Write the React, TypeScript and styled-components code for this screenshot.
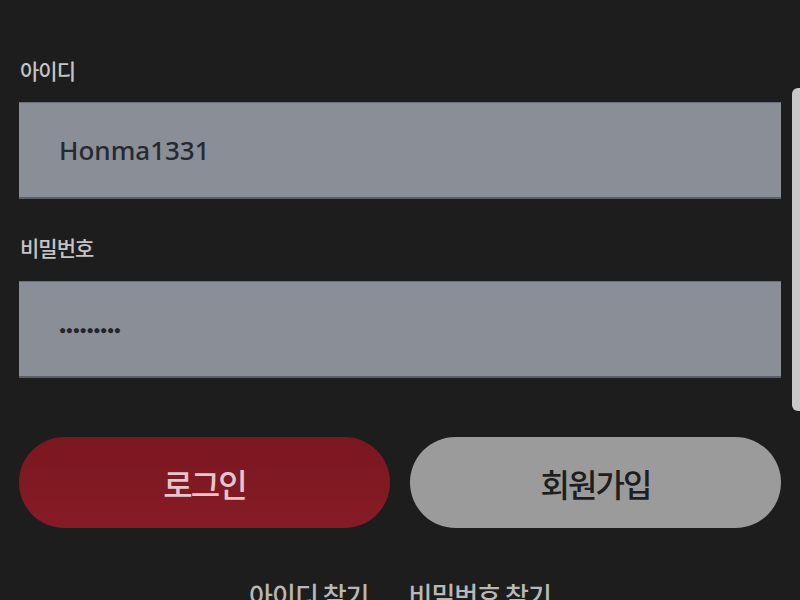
import React from "react"
import styled, { createGlobalStyle } from "styled-components"

const GlobalStyle = createGlobalStyle`
  html, body {
    margin: 0;
    padding: 0;
    background: #1d1d1d;
    overflow: hidden;
  }
  body {
    font-family: "Noto Sans CJK KR", "Noto Sans", sans-serif;
  }
`

const Screen = styled.div`
  position: relative;
  width: 800px;
  height: 600px;
  overflow: hidden;
  background: #1d1d1d;
`

const Form = styled.div`
  display: flex;
  flex-direction: column;
  padding: 58px 19px 0 19px;
`

const Label = styled.div<{ $gap?: number }>`
  margin-top: ${(p) => p.$gap ?? 0}px;
  padding-left: 1px;
  height: 24px;
  line-height: 24px;
  font-size: 21px;
  font-weight: 500;
  letter-spacing: -1px;
  color: #c4c4c4;
`

const Field = styled.div<{ $gap: number }>`
  margin-top: ${(p) => p.$gap}px;
  height: 97px;
  box-sizing: border-box;
  display: flex;
  align-items: center;
  padding-left: 40px;
  background: #8a8e96;
  border-top: 1px solid #6b6e74;
  border-bottom: 2px solid #5c5f65;
  color: #262930;
  font-family: "Noto Sans", sans-serif;
  font-size: 26px;
  font-weight: 500;
`

const Dots = styled.span`
  font-size: 12px;
  letter-spacing: -0.4px;
  color: #23262c;
`

const Buttons = styled.div`
  margin-top: 59px;
  display: grid;
  grid-template-columns: 1fr 1fr;
  gap: 20px;
`

const Pill = styled.button<{ $primary?: boolean }>`
  height: 91px;
  border: none;
  border-radius: 46px;
  font-family: "Noto Sans CJK KR", sans-serif;
  font-size: 32px;
  font-weight: 500;
  letter-spacing: -2px;
  background: ${(p) =>
    p.$primary ? "linear-gradient(#7a1720, #861b26)" : "#9b9b9b"};
  color: ${(p) => (p.$primary ? "#e6c6ca" : "#1e1e1e")};
`

const Links = styled.div`
  margin-top: 52px;
  display: flex;
  justify-content: center;
  gap: 40px;
  font-size: 26px;
  font-weight: 500;
  line-height: 30px;
  letter-spacing: -1px;
  color: #b8b8b8;
`

const Scrollbar = styled.div`
  position: absolute;
  top: 88px;
  right: 0;
  width: 8px;
  height: 323px;
  border-radius: 6px 0 0 6px;
  background: #c9c9c9;
`

export default function App() {
  return (
    <Screen>
      <GlobalStyle />
      <Form>
        <Label>아이디</Label>
        <Field $gap={20}>Honma1331</Field>
        <Label $gap={36}>비밀번호</Label>
        <Field $gap={22}>
          <Dots>●●●●●●●●●</Dots>
        </Field>
        <Buttons>
          <Pill $primary>로그인</Pill>
          <Pill>회원가입</Pill>
        </Buttons>
        <Links>
          <span>아이디 찾기</span>
          <span>비밀번호 찾기</span>
        </Links>
      </Form>
      <Scrollbar />
    </Screen>
  )
}
